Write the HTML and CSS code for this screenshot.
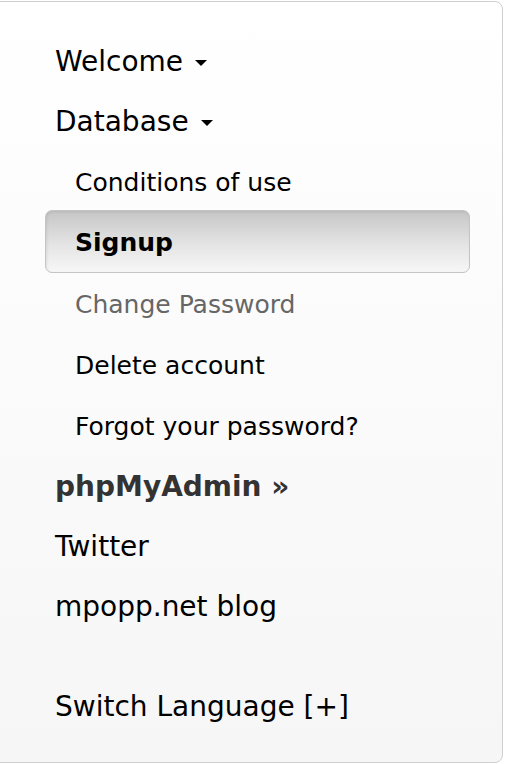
FILE: index.html
```html
<!DOCTYPE html>
<html lang="en">
<head>
    <meta charset="UTF-8">
    <meta name="viewport" content="width=device-width, initial-scale=1.0">
    <title>Menu</title>
    <link rel="stylesheet" href="styles.css">
</head>
<body>

<div class="panel">
    <ul class="menu">
        <li><a href="#">Welcome</a><span class="caret"></span></li>
        <li><a href="#">Database</a><span class="caret"></span>
            <ul class="submenu">
                <li><a href="#">Conditions of use</a></li>
                <li class="active"><a href="#">Signup</a></li>
                <li class="muted"><a href="#">Change Password</a></li>
                <li><a href="#">Delete account</a></li>
                <li><a href="#">Forgot your password?</a></li>
            </ul>
        </li>
        <li class="strong"><a href="#">phpMyAdmin &raquo;</a></li>
        <li><a href="#">Twitter</a></li>
        <li><a href="#">mpopp.net blog</a></li>
        <li class="lang"><a href="#">Switch Language [+]</a></li>
    </ul>
</div>

</body>
</html>
```

FILE: styles.css
```css
body {
    margin: 0;
    font-family: "DejaVu Sans", Verdana, sans-serif;
    background: #fff;
    overflow: hidden;
}
.panel {
    margin: 1px 3px 0 -20px;
    height: 730px;
    padding: 30px 32px 0 74px;
    border: 1px solid #cfcfcf;
    border-radius: 8px;
    background: linear-gradient(#ffffff, #f6f6f6);
}
ul {
    list-style: none;
    margin: 0;
    padding: 0;
}
a {
    color: #000;
    text-decoration: none;
}
.menu > li {
    font-size: 28px;
    line-height: 60px;
}
.caret {
    display: inline-block;
    margin-left: 12px;
    vertical-align: middle;
    border-top: 6px solid #000;
    border-left: 6px solid transparent;
    border-right: 6px solid transparent;
}
.submenu {
    padding-left: 20px;
}
.submenu li {
    font-size: 25px;
    line-height: 61px;
}
.submenu .active a {
    display: block;
    margin: -3px 0 1px -30px;
    padding: 3px 0 0 29px;
    line-height: 58px;
    font-weight: bold;
    border: 1px solid #c4c4c4;
    border-radius: 7px;
    background: linear-gradient(#c6c6c6, #e4e4e4 55%, #f7f7f7);
    box-shadow: inset 1px 1px 3px rgba(0, 0, 0, 0.08);
}
.muted a {
    color: #666;
}
.strong a {
    font-weight: bold;
    color: #333;
}
.lang {
    margin-top: 40px;
}
```
